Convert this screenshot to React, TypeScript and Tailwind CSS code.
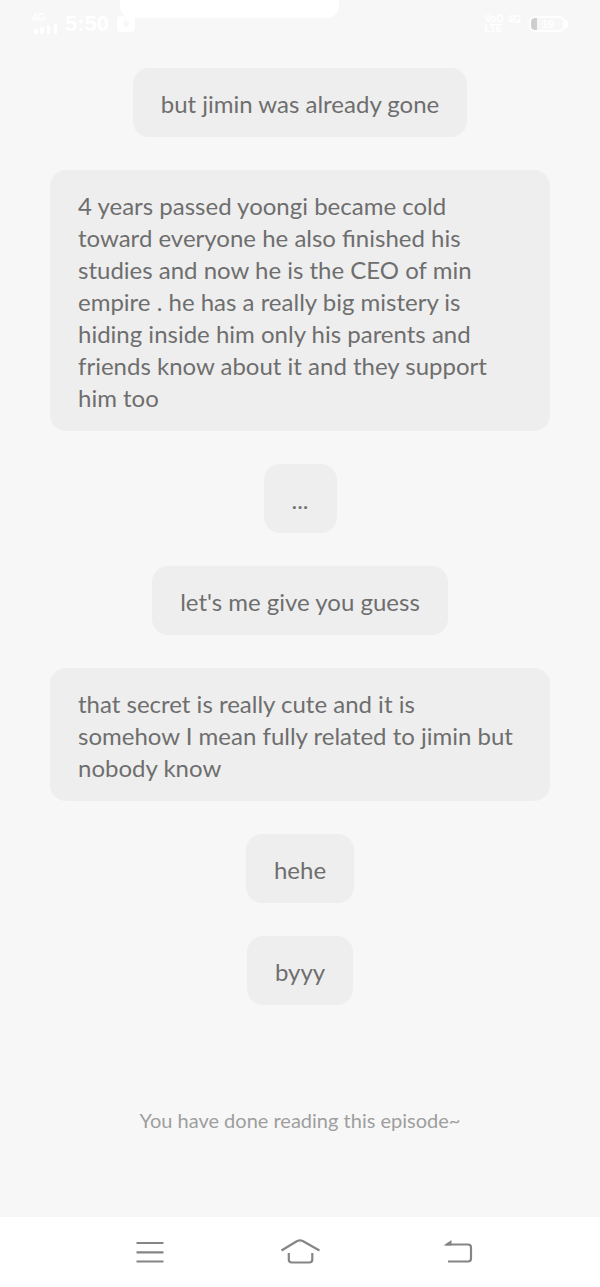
const messages = [
  { text: "but jimin was already gone" },
  {
    text: "4 years passed yoongi became cold\ntoward everyone he also finished his\nstudies and now he is the CEO of min\nempire . he has a really big mistery is\nhiding inside him only his parents and\nfriends know about it and they support\nhim too",
    wide: true,
  },
  { text: "..." },
  { text: "let's me give you guess" },
  {
    text: "that secret is really cute and it is\nsomehow I mean fully related to jimin but\nnobody know",
    wide: true,
  },
  { text: "hehe" },
  { text: "byyy" },
];

const StatusBar = () => {
  return (
    <header className="relative flex h-12 items-center justify-between px-8 font-['Liberation_Sans',sans-serif] font-bold text-white">
      {/* Pull-down panel edge */}
      <div className="absolute left-[120px] top-0 h-[18px] w-[219px] rounded-b-xl bg-white" />

      <div className="relative flex items-center gap-2">
        <div className="flex flex-col">
          <span className="text-[10px] leading-[10px]">4G</span>
          <svg width="25" height="12" viewBox="0 0 25 12" fill="currentColor" aria-hidden="true">
            <rect x="2" y="6" width="4" height="5" rx="1" />
            <rect x="8" y="4" width="4" height="7" rx="1" />
            <rect x="15" y="2" width="3" height="9" rx="1" />
            <rect x="22" y="1" width="3" height="10" rx="1" />
          </svg>
        </div>
        <span className="text-[22px] leading-6">5:50</span>
        <svg width="18" height="16" viewBox="0 0 18 16" aria-hidden="true">
          <rect width="18" height="16" rx="4" fill="#ffffff" />
          <path d="M9 4v6M6 7l3 3 3-3" fill="none" stroke="#f7f7f7" strokeWidth="2" />
        </svg>
      </div>

      <div className="flex items-center gap-1">
        <div className="flex flex-col text-[10px] leading-[10px]">
          <span>VoD</span>
          <span>LTE</span>
        </div>
        <span className="pb-2 text-[10px] leading-[10px]">4G</span>
        <div className="ml-1 flex items-center">
          <div className="flex h-4 w-9 items-center overflow-hidden rounded-md border-2 border-white">
            <span className="h-full w-[6px] bg-[#cfcfcf]" />
            <span className="flex-1 pr-1 text-center text-[11px] leading-3">19</span>
          </div>
          <span className="h-2 w-[3px] rounded-r bg-white" />
        </div>
      </div>
    </header>
  );
};

const NavBar = () => {
  return (
    <nav className="grid h-[70px] grid-cols-[1fr_auto_1fr] items-center gap-[116px] bg-white text-[#858585]">
      <button aria-label="Recent apps" className="justify-self-end">
        <svg width="28" height="28" viewBox="0 0 28 28" fill="none" stroke="currentColor" strokeWidth="2.2">
          <path d="M.5 5h27M.5 14.300h27M.5 23.500h27" />
        </svg>
      </button>
      <button aria-label="Home">
        <svg width="40" height="28" viewBox="0 0 40 28" fill="none" stroke="currentColor" strokeWidth="2.2">
          <path d="M1.500 12.500 15.500 4Q20 .8 24.500 4L39.500 12.500" />
          <path d="M8.800 15v6.500q0 3 3 3h17.500q3 0 3-3V15" />
        </svg>
      </button>
      <button aria-label="Back" className="justify-self-start pl-[7px]">
        <svg width="30" height="28" viewBox="0 0 30 28" fill="none" stroke="currentColor" strokeWidth="2.2">
          <path d="M3 6.500h22q3 0 3 3v11q0 3-3 3H5" />
          <path d="M.500 7.600 8.500 2v5.600Z" fill="currentColor" stroke="none" />
        </svg>
      </button>
    </nav>
  );
};

export default function App() {
  return (
    <div className="flex min-h-screen flex-col bg-[#f7f7f7] font-['Lato','Noto_Sans',sans-serif]">
      <StatusBar />

      <main className="flex flex-1 flex-col items-center gap-[33px] px-[50px] pt-5">
        {messages.map((message) => (
          <p
            key={message.text}
            className={`whitespace-pre-line rounded-2xl bg-[#eeeeee] px-7 pb-[17px] pt-5 text-2xl leading-8 text-[#6e6e6e] ${message.wide ? "w-full" : ""}`}
          >
            {message.text}
          </p>
        ))}

        <p className="pb-16 pt-[66px] text-xl leading-8 text-[#9e9e9e]">
          You have done reading this episode~
        </p>
      </main>

      <NavBar />
    </div>
  );
}
